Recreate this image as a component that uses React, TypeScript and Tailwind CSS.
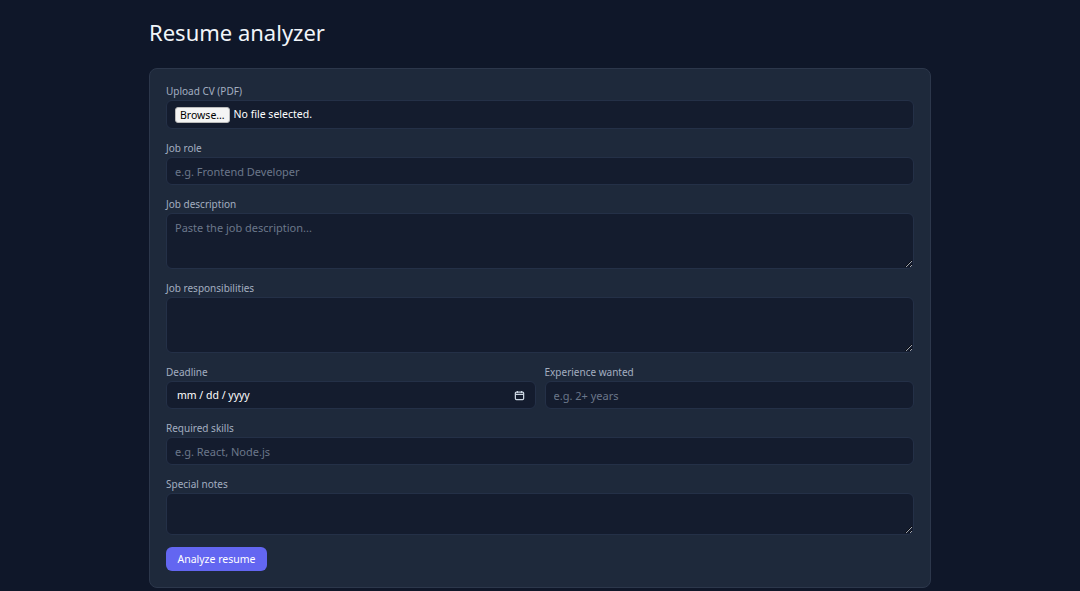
export default function App() {
  const box =
    "block w-full rounded-md border border-[#243047] bg-[#141c2e] px-2 text-[11px] text-slate-200 placeholder:text-[#6b778a] outline-none";
  const label = "block text-[10px] leading-[14px] text-[#a3aec0] mb-[2px]";

  return (
    <div
      className="min-h-[591px] bg-[#0f1729] text-slate-100"
      style={{ fontFamily: "'Noto Sans', sans-serif" }}
    >
      <div className="mx-auto w-[782px] pt-[16px]">
        <h1 className="text-[22px] leading-[32px] font-normal text-slate-100 mb-[20px]">
          Resume analyzer
        </h1>

        <div className="rounded-lg border border-[#2c374b] bg-[#1e293b] px-[16px] pt-[15px] pb-[16px] flex flex-col gap-[12px] leading-none">
          <div>
            <label className={label}>Upload CV (PDF)</label>
            <div className={box + " h-[29px] flex items-center gap-[4px]"}>
              <span className="rounded-[3px] bg-[#f4f4f4] text-black px-[4px] text-[10.5px] leading-[14px] border border-[#bbb]">
                Browse…
              </span>
              <span className="text-[10.5px] text-white">No file selected.</span>
            </div>
          </div>

          <div>
            <label className={label}>Job role</label>
            <input className={box + " h-[28px]"} placeholder="e.g. Frontend Developer" />
          </div>

          <div>
            <label className={label}>Job description</label>
            <textarea
              className={box + " h-[56px] py-[6px] resize-y leading-[16px]"}
              placeholder="Paste the job description..."
            />
          </div>

          <div>
            <label className={label}>Job responsibilities</label>
            <textarea className={box + " h-[56px] py-[6px] resize-y"} />
          </div>

          <div className="grid grid-cols-2 gap-[9px]">
            <div>
              <label className={label}>Deadline</label>
              <div className={box + " h-[28px] flex items-center justify-between pl-[10px] pr-[10px]"}>
                <span className="text-[10.5px] text-white">mm / dd / yyyy</span>
                <svg width="11" height="11" viewBox="0 0 16 16" fill="none" stroke="#cbd5e1" strokeWidth="1.8">
                  <rect x="2" y="3" width="12" height="11" rx="1.5" />
                  <path d="M2 6.5h12M5 1.5v3M11 1.5v3" />
                </svg>
              </div>
            </div>
            <div>
              <label className={label}>Experience wanted</label>
              <input className={box + " h-[28px]"} placeholder="e.g. 2+ years" />
            </div>
          </div>

          <div>
            <label className={label}>Required skills</label>
            <input className={box + " h-[28px]"} placeholder="e.g. React, Node.js" />
          </div>

          <div>
            <label className={label}>Special notes</label>
            <textarea className={box + " h-[42px] py-[6px] resize-y"} />
          </div>

          <div>
            <button className="block h-[24px] w-[101px] rounded-md bg-[#6366f1] text-[10.5px] text-white">
              Analyze resume
            </button>
          </div>
        </div>
      </div>
    </div>
  );
}
